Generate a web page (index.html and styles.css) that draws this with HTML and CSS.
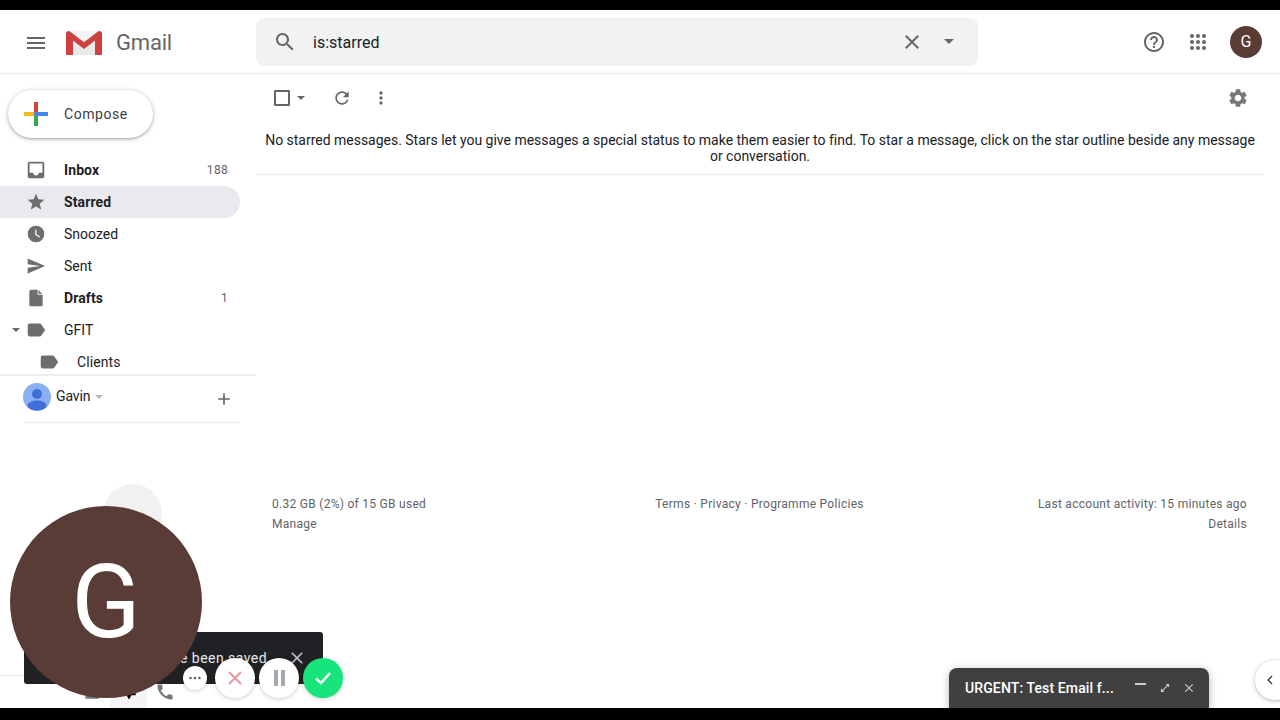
FILE: index.html
```html
<!DOCTYPE html>
<html lang="en">
<head>
<meta charset="utf-8">
<title>Gmail - Starred</title>
<link rel="stylesheet" href="styles.css">
</head>
<body>
<div class="screen">
  <div class="bar-top"></div>
  <div class="app">
    <header class="header">
      <div class="brand">
        <svg class="icon menu" viewBox="0 0 24 24"><path d="M3 18h18v-2H3v2zm0-5h18v-2H3v2zm0-7v2h18V6H3z"/></svg>
        <svg class="logo" width="38" height="28" viewBox="0 0 38 28"><path fill="#f4f4f4" d="M3 2h32v12H3z"/><path fill="#e9e9e9" d="M3 11h32v15H3z"/><path fill="#ce3f40" d="M1 4.500C1 2.500 3 1 5 2.500l14 10.700L33 2.500c2-1.500 4-.0 4 2v20c0 1-.8 1.500-1.500 1.500H30V11.500L19 20 8 11.500V26H2.500C1.800 26 1 25.500 1 24.500z"/></svg>
        <span class="wordmark">Gmail</span>
      </div>
      <div class="search">
        <svg class="icon search-glass" viewBox="0 0 24 24"><path d="M15.500 14h-.79l-.28-.27C15.410 12.590 16 11.110 16 9.500 16 5.910 13.090 3 9.500 3S3 5.910 3 9.500 5.910 16 9.500 16c1.610 0 3.090-.59 4.230-1.570l.27.28v.79l5 4.990L20.490 19l-4.990-5zm-6 0C7.010 14 5 11.990 5 9.500S7.010 5 9.500 5 14 7.010 14 9.500 11.990 14 9.500 14z"/></svg>
        <span class="query">is:starred</span>
        <svg class="icon search-clear" viewBox="0 0 24 24"><path d="M19 6.410 17.590 5 12 10.590 6.410 5 5 6.410 10.590 12 5 17.590 6.410 19 12 13.410 17.590 19 19 17.590 13.410 12z"/></svg>
        <span class="caret search-caret"></span>
      </div>
      <div class="header-actions">
        <svg class="icon help" viewBox="0 0 24 24"><path d="M11 18h2v-2h-2v2zm1-16C6.480 2 2 6.480 2 12s4.480 10 10 10 10-4.480 10-10S17.520 2 12 2zm0 18c-4.410 0-8-3.590-8-8s3.590-8 8-8 8 3.590 8 8-3.590 8-8 8zm0-14c-2.210 0-4 1.790-4 4h2c0-1.100.9-2 2-2s2 .9 2 2c0 2-3 1.750-3 5h2c0-2.250 3-2.500 3-5 0-2.210-1.790-4-4-4z"/></svg>
        <svg class="icon apps" viewBox="0 0 18 18"><circle cx="3" cy="3" r="2"/><circle cx="9" cy="3" r="2"/><circle cx="15" cy="3" r="2"/><circle cx="3" cy="9" r="2"/><circle cx="9" cy="9" r="2"/><circle cx="15" cy="9" r="2"/><circle cx="3" cy="15" r="2"/><circle cx="9" cy="15" r="2"/><circle cx="15" cy="15" r="2"/></svg>
        <span class="avatar">G</span>
      </div>
    </header>
    <div class="body">
      <aside class="sidebar">
        <button class="compose">
          <svg width="24" height="24" viewBox="0 0 24 24"><path fill="#d93f3c" d="M10 0h4v10h-4z"/><path fill="#f4bd1a" d="M0 10h10v4H0z"/><path fill="#4285f4" d="M14 10h10v4H14z"/><path fill="#34a853" d="M10 14h4v10h-4z"/><path fill="#5a80d0" d="M10 10h4v4h-4z"/></svg>
          <span>Compose</span>
        </button>
        <nav class="nav">
          <a class="row bold">
            <svg class="icon row-icon big" viewBox="0 0 24 24"><path d="M19 3H5c-1.100 0-2 .9-2 2v14c0 1.100.9 2 2 2h14c1.100 0 2-.9 2-2V5c0-1.100-.9-2-2-2zm0 12h-4c0 1.660-1.350 3-3 3s-3-1.340-3-3H5V5h14v10z"/></svg>
            <span class="row-label">Inbox</span><span class="count">188</span>
          </a>
          <a class="row bold active">
            <svg class="icon row-icon" viewBox="0 0 24 24"><path d="M12 17.270 18.180 21l-1.640-7.030L22 9.240l-7.190-.61L12 2 9.190 8.630 2 9.240l5.460 4.730L5.820 21z"/></svg>
            <span class="row-label">Starred</span>
          </a>
          <a class="row">
            <svg class="icon row-icon" viewBox="0 0 24 24"><path d="M12 2a10 10 0 1 0 0 20 10 10 0 0 0 0-20zm4.200 14.200L11 13V7h1.500v5.200l4.500 2.700z"/></svg>
            <span class="row-label">Snoozed</span>
          </a>
          <a class="row">
            <svg class="icon row-icon" viewBox="0 0 24 24"><path d="M2.010 21 23 12 2.010 3 2 10l15 2-15 2z"/></svg>
            <span class="row-label">Sent</span>
          </a>
          <a class="row bold">
            <svg class="icon row-icon" viewBox="0 0 24 24"><path d="M14 2H6c-1.100 0-2 .9-2 2v16c0 1.100.9 2 2 2h12c1.100 0 2-.9 2-2V8h-6z"/><path d="M15 2.500V7h4.500z"/></svg>
            <span class="row-label">Drafts</span><span class="count">1</span>
          </a>
          <a class="row">
            <span class="caret row-caret"></span>
            <svg class="icon row-icon big" viewBox="0 0 24 24"><path d="M17.630 5.840C17.270 5.330 16.670 5 16 5L5 5.010C3.900 5.010 3 5.900 3 7v10c0 1.100.9 1.990 2 1.990L16 19c.67 0 1.270-.33 1.630-.84L22 12z"/></svg>
            <span class="row-label">GFIT</span>
          </a>
          <a class="row nested">
            <svg class="icon row-icon big" viewBox="0 0 24 24"><path d="M17.630 5.840C17.270 5.330 16.670 5 16 5L5 5.010C3.900 5.010 3 5.900 3 7v10c0 1.100.9 1.990 2 1.990L16 19c.67 0 1.270-.33 1.630-.84L22 12z"/></svg>
            <span class="row-label">Clients</span>
          </a>
        </nav>
        <div class="chat-user">
          <svg class="user-pic" width="28" height="28" viewBox="0 0 28 28"><circle cx="14" cy="14" r="14" fill="#8ab0f3"/><circle cx="14" cy="11" r="5" fill="#3f6fd8"/><ellipse cx="14" cy="22.500" rx="9.500" ry="5" fill="#3f6fd8"/></svg>
          <span class="user-name">Gavin</span>
          <span class="caret user-caret"></span>
          <svg class="icon user-add" viewBox="0 0 24 24"><path d="M19 13h-6v6h-2v-6H5v-2h6V5h2v6h6z"/></svg>
        </div>
        <div class="chat-tabs">
          <span class="tab">
            <svg class="icon tab-icon" viewBox="0 0 24 24"><path d="M12 12a4 4 0 1 0 0-8 4 4 0 0 0 0 8zm0 2c-2.700 0-8 1.300-8 4v2h16v-2c0-2.700-5.300-4-8-4z"/></svg>
          </span>
          <span class="tab tab-active">
            <svg class="tab-chat" viewBox="0 0 24 24"><path d="M4 4h16v12h-5l-3 5-3-5H4z"/></svg>
          </span>
          <span class="tab">
            <svg class="icon tab-icon" viewBox="0 0 24 24"><path d="M20.010 15.380c-1.230 0-2.420-.2-3.530-.56-.35-.12-.74-.03-1.010.24l-1.570 1.970c-2.830-1.350-5.480-3.900-6.890-6.830l1.950-1.660c.27-.28.35-.67.24-1.020-.37-1.110-.56-2.300-.56-3.530 0-.54-.45-.99-.99-.99H4.190C3.650 3 3 3.240 3 3.990 3 13.280 10.730 21 20.010 21c.71 0 .99-.63.99-1.180v-3.450c0-.54-.45-.99-.99-.99z"/></svg>
          </span>
        </div>
      </aside>
      <main class="main">
        <div class="toolbar">
          <span class="checkbox"></span>
          <span class="caret tool-caret"></span>
          <svg class="icon tool-refresh" viewBox="0 0 24 24"><path d="M17.650 6.350C16.200 4.900 14.210 4 12 4c-4.420 0-7.990 3.580-7.990 8s3.570 8 7.990 8c3.730 0 6.840-2.550 7.730-6h-2.080c-.82 2.330-3.040 4-5.650 4-3.310 0-6-2.690-6-6s2.690-6 6-6c1.660 0 3.140.69 4.220 1.780L13 11h7V4l-2.350 2.350z"/></svg>
          <svg class="icon tool-more" viewBox="0 0 24 24"><path d="M12 8a2 2 0 1 0 0-4 2 2 0 0 0 0 4zm0 2a2 2 0 1 0 0 4 2 2 0 0 0 0-4zm0 6a2 2 0 1 0 0 4 2 2 0 0 0 0-4z"/></svg>
          <svg class="icon tool-gear" viewBox="0 0 24 24"><path d="M19.140 12.940c.04-.3.06-.61.06-.94 0-.32-.02-.64-.07-.94l2.030-1.580c.18-.14.23-.41.12-.61l-1.920-3.320c-.12-.22-.37-.29-.59-.22l-2.390.96c-.5-.38-1.030-.7-1.620-.94L14.400 2.810c-.04-.24-.24-.41-.48-.41h-3.840c-.24 0-.43.17-.47.41L9.250 5.350c-.59.24-1.130.57-1.620.94l-2.390-.96c-.22-.08-.47 0-.59.22L2.740 8.870c-.12.21-.08.47.12.61l2.030 1.580c-.05.3-.09.63-.09.94s.02.64.07.94l-2.030 1.580c-.18.14-.23.41-.12.61l1.920 3.320c.12.22.37.29.59.22l2.390-.96c.5.38 1.030.7 1.620.94l.36 2.540c.05.24.24.41.48.41h3.840c.24 0 .44-.17.47-.41l.36-2.540c.59-.24 1.130-.56 1.620-.94l2.390.96c.22.08.47 0 .59-.22l1.920-3.320c.12-.22.07-.47-.12-.61zM12 15.600c-1.980 0-3.600-1.620-3.600-3.600s1.620-3.600 3.600-3.600 3.600 1.620 3.600 3.600-1.620 3.600-3.600 3.600z"/></svg>
        </div>
        <p class="empty">No starred messages. Stars let you give messages a special status to make them easier to find. To star a message, click on the star outline beside any message or conversation.</p>
        <footer class="footer">
          <div class="foot-col">
            <span>0.32 GB (2%) of 15 GB used</span>
            <span>Manage</span>
          </div>
          <div class="foot-col foot-center">
            <span>Terms · Privacy · Programme Policies</span>
          </div>
          <div class="foot-col foot-right">
            <span>Last account activity: 15 minutes ago</span>
            <span>Details</span>
          </div>
        </footer>
      </main>
    </div>
  </div>
  <div class="bar-bottom"></div>

  <div class="side-toggle">
    <svg class="icon toggle-icon" viewBox="0 0 24 24"><path d="M15.410 7.410 14 6l-6 6 6 6 1.410-1.410L10.830 12z"/></svg>
  </div>

  <div class="draft">
    <span class="draft-title">URGENT: Test Email f...</span>
    <span class="draft-min"></span>
    <svg class="draft-icon" viewBox="0 0 24 24"><path d="M5 19v-6l2.300 2.300 8-8L13 5h6v6l-2.300-2.300-8 8L11 19z"/></svg>
    <svg class="draft-icon" viewBox="0 0 24 24"><path d="M19 6.410 17.590 5 12 10.590 6.410 5 5 6.410 10.590 12 5 17.590 6.410 19 12 13.410 17.590 19 19 17.590 13.410 12z"/></svg>
  </div>

  <div class="toast">
    <span class="toast-text">Your preferences have been saved</span>
    <svg class="toast-close" viewBox="0 0 24 24"><path d="M19 6.410 17.590 5 12 10.590 6.410 5 5 6.410 10.590 12 5 17.590 6.410 19 12 13.410 17.590 19 19 17.590 13.410 12z"/></svg>
  </div>

  <div class="cam-ghost"></div>
  <div class="cam">G</div>

  <div class="rec-controls">
    <span class="rec rec-small"><svg width="14" height="4" viewBox="0 0 14 4"><circle cx="2.500" cy="2" r="1.200"/><circle cx="7" cy="2" r="1.200"/><circle cx="11.500" cy="2" r="1.200"/></svg></span>
    <span class="rec rec-cancel"><svg width="16" height="16" viewBox="0 0 16 16"><path d="M2 2l12 12M14 2 2 14"/></svg></span>
    <span class="rec rec-pause"><span class="pause-bar"></span><span class="pause-bar"></span></span>
    <span class="rec rec-done"><svg width="18" height="14" viewBox="0 0 18 14"><path d="M2 7.500 7 12 16 2"/></svg></span>
  </div>
</div>
</body>
</html>
```

FILE: styles.css
```css
* { box-sizing: border-box; }
html, body { margin: 0; height: 100%; background: #000; }
body { font-family: Roboto, "Liberation Sans", sans-serif; color: #202124; font-size: 14px; overflow: hidden; }

.screen { position: relative; width: 1280px; height: 720px; display: flex; flex-direction: column; overflow: hidden; background: #fff; }
.bar-top { height: 10px; background: #000; flex: none; }
.bar-bottom { height: 12px; background: #000; flex: none; position: relative; z-index: 3; }
.app { flex: 1; min-height: 0; display: flex; flex-direction: column; background: #fff; }

.icon { width: 24px; height: 24px; fill: #666; flex: none; display: block; }
.caret { width: 0; height: 0; border-left: 5px solid transparent; border-right: 5px solid transparent; border-top: 5px solid #666; flex: none; display: block; }

/* header */
.header { height: 64px; flex: none; display: flex; align-items: center; border-bottom: 1px solid #e8eaed; }
.brand { width: 256px; flex: none; display: flex; align-items: center; padding-left: 24px; margin-top: 2px; }
.logo { margin-left: 17px; flex: none; }
.wordmark { margin-left: 13px; font-size: 22px; color: #666; letter-spacing: -.2px; }
.search { width: 722px; height: 48px; flex: none; background: #f1f2f2; border-radius: 8px; display: flex; align-items: center; padding-left: 17px; }
.query { margin-left: 16px; margin-top: 2px; font-size: 16px; flex: 1; color: #202124; }
.search-clear { margin-right: 20px; }
.search-caret { margin-right: 24px; }
.header-actions { flex: 1; display: flex; align-items: center; justify-content: flex-end; padding-right: 18px; }
.apps { width: 18px; height: 18px; margin-left: 23px; }
.avatar { width: 32px; height: 32px; border-radius: 50%; background: #593c35; color: #fff; font-size: 16px; display: flex; align-items: center; justify-content: center; margin-left: 23px; }

/* layout */
.body { flex: 1; min-height: 0; display: flex; }
.sidebar { width: 256px; flex: none; display: flex; flex-direction: column; }
.main { flex: 1; min-width: 0; display: flex; flex-direction: column; padding-right: 16px; }

/* sidebar */
.compose { margin: 16px 0 16px 8px; width: 145px; height: 48px; flex: none; border: 0; border-radius: 24px; background: #fff; box-shadow: 0 1px 2px rgba(60,64,67,.3), 0 1px 4px 1px rgba(60,64,67,.2); display: flex; align-items: center; padding: 0 0 0 16px; gap: 16px; font: 400 14px Roboto, sans-serif; color: #3c4043; letter-spacing: .55px; }
.nav { height: 220px; flex: none; overflow: hidden; }
.row { height: 32px; width: 240px; display: flex; align-items: center; padding: 0 12px 0 26px; border-radius: 0 16px 16px 0; position: relative; color: #202124; }
.row.bold { font-weight: 700; letter-spacing: .1px; }
.row.active { background: #e8eaed; }
.row-icon { width: 20px; height: 20px; fill: #6e6e6e; }
.row-icon.big { width: 22px; height: 22px; margin: 0 -1px; }
.row-label { margin-left: 18px; flex: 1; }
.count { font-size: 12px; font-weight: 400; color: #5f6368; letter-spacing: .3px; }
.row-caret { position: absolute; left: 12px; top: 14px; border-left-width: 4px; border-right-width: 4px; border-top-width: 4px; }
.row.nested { padding-left: 39px; }
.row.nested .row-label { letter-spacing: .1px; }
.chat-user { height: 49px; border-top: 2px solid #eceded; display: flex; align-items: center; padding: 0 16px 5px 23px; flex: none; position: relative; }
.chat-user::after { content: ""; position: absolute; left: 24px; right: 16px; bottom: 0; height: 1px; background: #e8eaed; }
.user-pic { flex: none; }
.user-name { margin-left: 5px; font-size: 14px; letter-spacing: -.1px; position: relative; top: -1px; }
.user-caret { margin-left: 5px; border-left-width: 4px; border-right-width: 4px; border-top-width: 4px; border-top-color: #b5b8bb; }
.user-add { width: 20px; height: 20px; margin-left: auto; margin-right: 6px; position: relative; top: 2px; }
.chat-tabs { margin-top: auto; height: 33px; flex: none; border-top: 1px solid #e8eaed; display: flex; padding-left: 74px; }
.tab { width: 36px; display: flex; align-items: center; justify-content: center; }
.tab-active { background: #f5f5f5; width: 37px; }
.tab-icon { width: 20px; height: 20px; fill: #777; }
.tab-chat { width: 20px; height: 20px; fill: #000; }

/* main */
.toolbar { height: 48px; flex: none; display: flex; align-items: center; padding: 0 16px 0 18px; }
.checkbox { width: 16px; height: 16px; border: 2px solid #666; border-radius: 1px; flex: none; }
.tool-caret { margin-left: 7px; border-left-width: 4px; border-right-width: 4px; border-top-width: 4px; }
.tool-refresh { width: 20px; height: 20px; margin-left: 27px; }
.tool-more { width: 20px; height: 20px; margin-left: 19px; }
.tool-gear { width: 22px; height: 22px; margin-left: auto; margin-right: -1px; fill: #777; }
.empty { margin: 0; padding: 10px 8px 10px; text-align: center; line-height: 16px; border-bottom: 1px solid #e8eaed; color: #202124; letter-spacing: -.015px; }
.footer { margin-top: 321px; display: flex; justify-content: space-between; padding: 0 17px 0 16px; font-size: 12px; color: #5f6368; letter-spacing: .28px; }
.foot-col { display: flex; flex-direction: column; gap: 4px; line-height: 16px; width: 250px; }
.foot-center { text-align: center; width: auto; }
.foot-right { text-align: right; }

/* floating */
.side-toggle { position: absolute; left: 1255px; top: 660px; width: 40px; height: 40px; border-radius: 50%; background: #fff; box-shadow: 0 1px 4px rgba(60,64,67,.4); display: flex; align-items: center; padding-left: 6px; }
.toggle-icon { width: 18px; height: 18px; fill: #444; }

.draft { position: absolute; left: 949px; top: 668px; width: 260px; height: 40px; background: #404040; border-radius: 8px 8px 0 0; box-shadow: 0 2px 8px rgba(0,0,0,.3); display: flex; align-items: center; padding: 0 13px 0 16px; color: #fff; font-weight: 500; letter-spacing: .12px; }
.draft-title { flex: 1; }
.draft-min { width: 11px; height: 2px; background: #ccc; margin-right: 2px; margin-top: -8px; }
.draft-icon { width: 14px; height: 14px; fill: #ccc; margin-left: 10px; }

.toast { position: absolute; left: 24px; top: 632px; width: 299px; height: 52px; background: #1f2125; border-radius: 3px; display: flex; align-items: center; justify-content: flex-end; padding-right: 16px; color: #e8eaed; }
.toast-text { flex: none; white-space: nowrap; margin-right: 20px; letter-spacing: .45px; }
.toast-close { width: 20px; height: 20px; fill: #bbb; flex: none; }

.cam-ghost { position: absolute; left: 103px; top: 484px; width: 59px; height: 60px; border-radius: 50%; background: #f1f1f1; }
.cam { position: absolute; left: 10px; top: 506px; width: 192px; height: 192px; border-radius: 50%; background: #593c35; color: #fff; font-size: 102px; display: flex; align-items: center; justify-content: center; }

.rec-controls { position: absolute; left: 183px; top: 658px; height: 40px; display: flex; align-items: center; }
.rec { border-radius: 50%; background: #fff; box-shadow: 0 1px 4px rgba(0,0,0,.2); display: flex; align-items: center; justify-content: center; flex: none; }
.rec-small { width: 24px; height: 24px; fill: #555; }
.rec-cancel, .rec-pause, .rec-done { width: 40px; height: 40px; margin-left: 4px; }
.rec-cancel { margin-left: 8px; }
.rec-cancel svg { stroke: #e59aa6; stroke-width: 2.200; fill: none; }
.rec-pause { gap: 3px; }
.pause-bar { width: 4px; height: 16px; background: #a4a9ad; }
.rec-done { background: #17e57c; }
.rec-done svg { stroke: #fff; stroke-width: 2.500; fill: none; }
```
